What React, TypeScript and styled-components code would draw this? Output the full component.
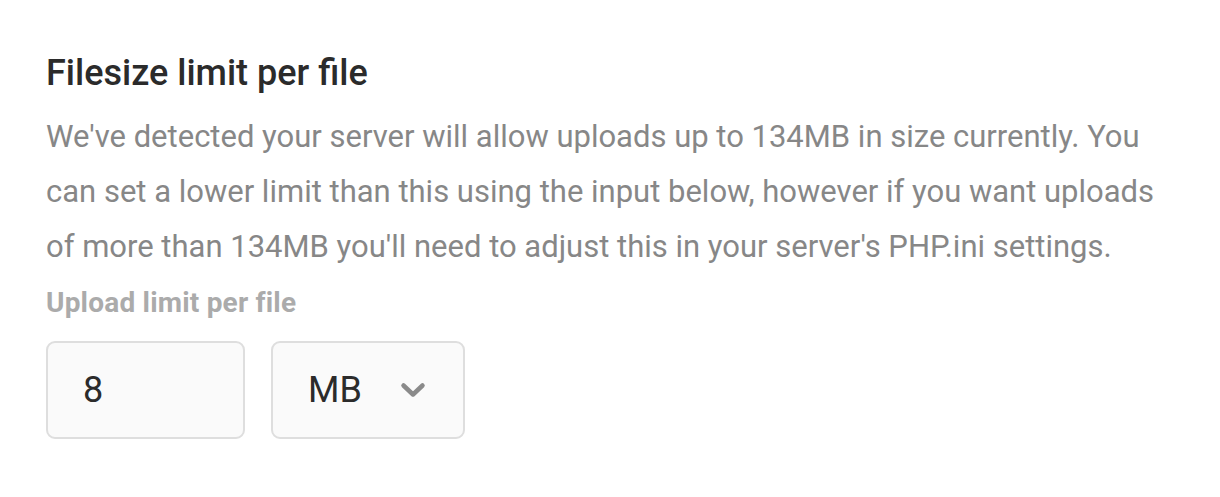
import React from 'react';
import styled, { createGlobalStyle } from 'styled-components';

const GlobalStyle = createGlobalStyle`
  body {
    margin: 0;
    background: #ffffff;
    font-family: Roboto, "Noto Sans", sans-serif;
  }
`;

const Section = styled.section`
  padding: 49px 46px 0 46px;
  width: 1128px;
`;

const Title = styled.h2`
  margin: 0;
  font-size: 36px;
  font-weight: 500;
  line-height: 48px;
  color: #2b2b2b;
`;

const Description = styled.p`
  margin: 12px 0 0 0;
  font-size: 31px;
  line-height: 55px;
  color: #878787;
`;

const Label = styled.label`
  display: block;
  margin-top: 11px;
  font-size: 28px;
  font-weight: 700;
  line-height: 36px;
  letter-spacing: 0.2px;
  color: #ababab;
`;

const Controls = styled.div`
  display: flex;
  gap: 26px;
  margin-top: 20px;
`;

const Field = styled.div<{ $width: number }>`
  box-sizing: border-box;
  width: ${p => p.$width}px;
  height: 98px;
  border: 2px solid #dedede;
  border-radius: 9px;
  background: #fafafa;
  display: flex;
  align-items: center;
  gap: 38px;
  padding: 0 35px;
  font-size: 36px;
  color: #2b2b2b;
`;

const Chevron = styled.svg`
  width: 26px;
  height: 16px;
  flex: none;
`;

export default function App() {
  return (
    <>
      <GlobalStyle />
      <Section>
        <Title>Filesize limit per file</Title>
        <Description>
          We've detected your server will allow uploads up to 134MB in size currently. You can set a lower limit than
          this using the input below, however if you want uploads of more than 134MB you'll need to adjust this in your
          server's PHP.ini settings.
        </Description>
        <Label>Upload limit per file</Label>
        <Controls>
          <Field $width={199}>8</Field>
          <Field $width={194}>
            MB
            <Chevron viewBox="0 0 26 16" fill="none" stroke="#8a8a8a" strokeWidth="4.5" strokeLinecap="round" strokeLinejoin="round">
              <polyline points="3.5 3.5 13 12.5 22.5 3.5" />
            </Chevron>
          </Field>
        </Controls>
      </Section>
    </>
  );
}
